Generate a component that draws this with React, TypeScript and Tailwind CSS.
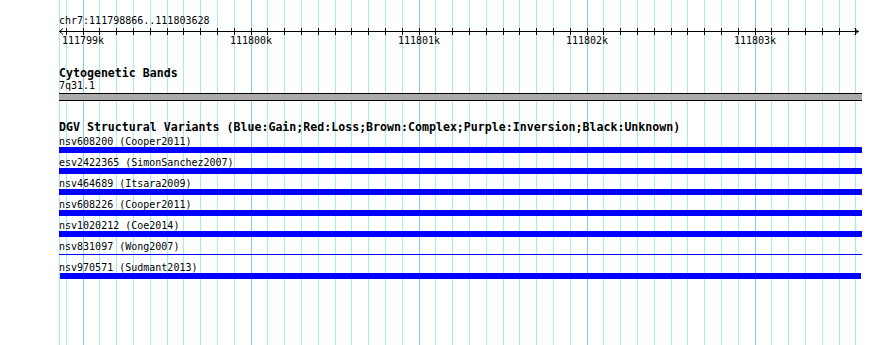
const START = 111798866
const PX_PER_BP = 0.168
const LEFT = 60

const toX = (bp: number) => LEFT + (bp - START) * PX_PER_BP

// every 100bp gets a grid line, every 1000bp a darker one
const gridPositions: number[] = []
for (let bp = 111798900; bp <= 111803600; bp += 100) gridPositions.push(bp)

const variants = [
  { name: 'nsv608200 (Cooper2011)', thin: false, short: false },
  { name: 'esv2422365 (SimonSanchez2007)', thin: false, short: false },
  { name: 'nsv464689 (Itsara2009)', thin: false, short: false },
  { name: 'nsv608226 (Cooper2011)', thin: false, short: false },
  { name: 'nsv1020212 (Coe2014)', thin: false, short: false },
  { name: 'nsv831097 (Wong2007)', thin: true, short: false },
  { name: 'nsv970571 (Sudmant2013)', thin: false, short: true },
]

const mono = "font-['DejaVu_Sans_Mono','Liberation_Mono',monospace]"

function Grid() {
  return (
    <svg className="absolute inset-0" width={890} height={345}>
      <line x1={59.5} y1={0} x2={59.5} y2={345} stroke="#a8eaf2" strokeWidth={1} />
      {gridPositions.map((bp) => {
        const x = Math.round(toX(bp)) + 0.5
        const major = bp % 1000 === 0
        return (
          <line key={bp} x1={x} y1={0} x2={x} y2={345} stroke={major ? '#88c8f4' : '#a8eaf2'} strokeWidth={1} />
        )
      })}
    </svg>
  )
}

function Ruler() {
  // coordinates relative to the track column, which starts at x=59
  const off = 59
  return (
    <svg width={803} height={21} className="block">
      <line x1={0} y1={4.5} x2={800} y2={4.5} stroke="#000" strokeWidth={1} />
      <polyline points="4,1.5 0.5,4.5 4,7.5" fill="none" stroke="#000" strokeWidth={1} />
      <polyline points="795.5,1.5 799.5,4.5 795.5,7.5" fill="none" stroke="#000" strokeWidth={1} />
      {gridPositions.map((bp) => {
        const x = Math.round(toX(bp)) - off + 0.5
        return <line key={bp} x1={x} y1={1} x2={x} y2={8} stroke="#000" strokeWidth={1} />
      })}
      {gridPositions
        .filter((bp) => bp % 1000 === 0)
        .map((bp) => (
          <text
            key={bp}
            x={Math.round(toX(bp)) - off}
            y={17}
            textAnchor="middle"
            fontSize={10}
            fontFamily="'DejaVu Sans Mono', 'Liberation Mono', monospace"
            fill="#000"
          >
            {bp / 1000}k
          </text>
        ))}
    </svg>
  )
}

export default function App() {
  return (
    <div className="relative w-[890px] h-[345px] bg-white overflow-hidden text-black">
      <Grid />

      <div className={`relative ml-[59px] w-[803px] ${mono}`}>
        {/* Ruler */}
        <div className="mt-[15px] text-[10px] leading-[12px]">chr7:111798866..111803628</div>
        <Ruler />

        {/* Cytogenetic Bands */}
        <div className="mt-[19px] text-[11.6px] leading-[13px] font-bold">Cytogenetic Bands</div>
        <div className="text-[10px] leading-[11px]">7q31.1</div>
        <div className="mt-[2px] h-[8px] bg-[#aaaaaa] border-y border-black" />

        {/* DGV */}
        <div className="mt-[20px] text-[11.6px] leading-[13px] font-bold">
          DGV Structural Variants (Blue:Gain;Red:Loss;Brown:Complex;Purple:Inversion;Black:Unknown)
        </div>
        <div className="mt-[2px] flex flex-col gap-[4px]">
          {variants.map((v) => (
            <div key={v.name}>
              <div className="text-[10px] leading-[11px]">{v.name}</div>
              {v.thin ? (
                <div className="h-[6px] pt-[2px]">
                  <div className="h-[1px] bg-[#0000ff]" />
                </div>
              ) : (
                <div className={`h-[6px] bg-[#0000ff] ${v.short ? 'ml-[1px] w-[801px]' : ''}`} />
              )}
            </div>
          ))}
        </div>
      </div>
    </div>
  )
}
